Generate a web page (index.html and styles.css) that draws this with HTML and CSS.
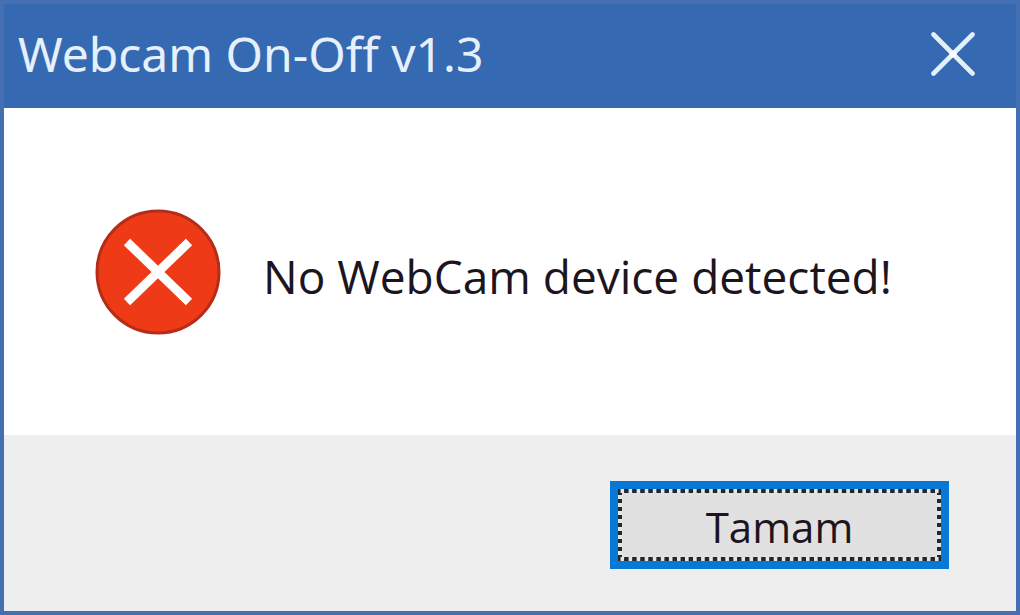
FILE: index.html
```html
<!DOCTYPE html>
<html lang="en">
<head>
<meta charset="utf-8">
<meta name="viewport" content="width=device-width, initial-scale=1">
<title>Webcam On-Off v1.3</title>
<link rel="stylesheet" href="styles.css">
</head>
<body>
<main class="dialog" role="alertdialog" aria-labelledby="title" aria-describedby="message">
  <header class="titlebar">
    <h1 class="title" id="title">Webcam On-Off v1.3</h1>
    <button class="close" type="button" aria-label="Close">
      <svg class="close-icon" viewBox="0 0 44 44" aria-hidden="true">
        <path d="M2.5 2.5 41.500 41.500M41.500 2.500 2.500 41.500" fill="none" stroke="#e4effb" stroke-width="4.600" stroke-linecap="round"/>
        <circle cx="22" cy="22" r="3.500" fill="#fff"/>
      </svg>
    </button>
  </header>
  <section class="content">
    <svg class="error-icon" viewBox="0 0 126 126" aria-hidden="true">
      <circle cx="63" cy="63" r="61" fill="#ee3a16" stroke="#b52c18" stroke-width="3"/>
      <path d="M32 33 94 93M94 33 32 93" fill="none" stroke="#fff" stroke-width="9"/>
    </svg>
    <p class="message" id="message">No WebCam device detected!</p>
  </section>
  <footer class="actions">
    <button class="ok" type="button"><span class="focus-ring">Tamam</span></button>
  </footer>
</main>
</body>
</html>
```
FILE: styles.css
```css
* {
  box-sizing: border-box;
}

body {
  margin: 0;
  font-family: "Noto Sans", "Open Sans", sans-serif;
}

.dialog {
  display: flex;
  flex-direction: column;
  min-height: 100vh;
  border: 4px solid #456fb3;
  background: #fff;
}

.titlebar {
  display: flex;
  align-items: center;
  justify-content: space-between;
  height: 104px;
  padding: 0 37px 4px 14px;
  background: #356ab2;
}

.title {
  margin: 0;
  color: #e6f0fc;
  font-size: 48px;
  font-weight: 400;
  line-height: 64px;
  white-space: nowrap;
}

.close {
  display: flex;
  padding: 4px;
  border: 0;
  background: transparent;
}

.close-icon {
  width: 44px;
  height: 44px;
}

.content {
  display: flex;
  flex: 1;
  align-items: center;
  gap: 42px;
  padding: 0 91px;
}

.error-icon {
  flex: none;
  width: 126px;
  height: 126px;
}

.message {
  margin: 0;
  padding-top: 8px;
  color: #1c1520;
  font-family: "Open Sans", "Noto Sans", sans-serif;
  font-size: 46px;
  font-weight: 500;
  line-height: 60px;
  white-space: nowrap;
}

.actions {
  display: flex;
  justify-content: flex-end;
  padding: 46px 67px 42px;
  background: #eeeeee;
}

.ok {
  width: 339px;
  height: 88px;
  padding: 0;
  border: 8px solid #0878d6;
  background: #e1e1e1;
  color: #1c1520;
  font-family: "Open Sans", "Noto Sans", sans-serif;
  font-size: 42px;
  font-weight: 500;
  line-height: 60px;
}

.focus-ring {
  --dot-x: linear-gradient(90deg, #e6e6e6 25%, #1d2a30 25% 75%, #e6e6e6 75%);
  --dot-y: linear-gradient(#e6e6e6 25%, #1d2a30 25% 75%, #e6e6e6 75%);
  display: flex;
  align-items: center;
  justify-content: center;
  height: 100%;
  padding-top: 4px;
  background:
    var(--dot-x) top / 8px 4px round no-repeat,
    var(--dot-x) bottom / 8px 4px round no-repeat,
    var(--dot-y) left / 4px 8px no-repeat round,
    var(--dot-y) right / 4px 8px no-repeat round;
}
```
